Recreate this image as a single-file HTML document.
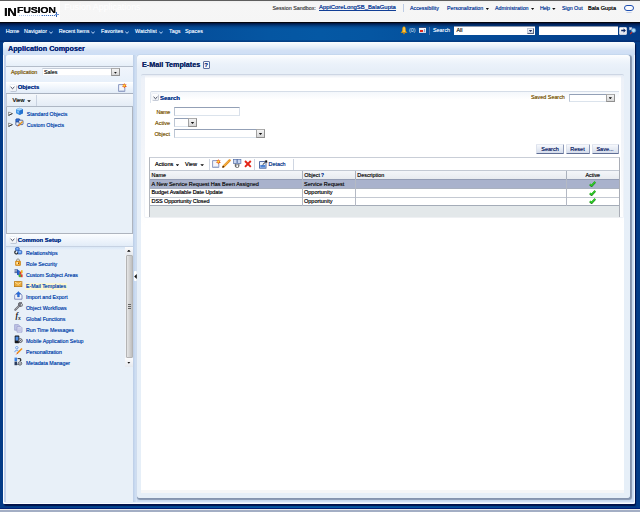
<!DOCTYPE html>
<html>
<head>
<meta charset="utf-8">
<title>Application Composer</title>
<style>
*{box-sizing:border-box;margin:0;padding:0}
html,body{width:640px;height:512px;overflow:hidden}
body{background:linear-gradient(90deg,#033b87 0,#044996 22%,#0556a2 42%,#0558a4 50%,#0556a2 58%,#044996 78%,#033b87 100%);font-family:"Liberation Sans",sans-serif;font-size:5.5px;color:#222;position:relative}
.a{position:absolute}
.t{position:absolute;white-space:nowrap;line-height:1;text-shadow:0 0 .35px currentColor}
/* header */
#hdr{left:0;top:0;width:640px;height:23px;background:linear-gradient(#e9e9e9 0,#f3f3f3 2px,#f6f6f6 4px,#f5f5f5)}
#hdrtop{left:0;top:0;width:640px;height:1px;background:#5e5e5e}
#hdrbot{left:0;top:22.2px;width:640px;height:1.3px;background:#05070f}
#logo{left:0;top:1px;width:60px;height:21px;background:#fff}
#nav{left:0;top:23.4px;width:640px;height:18.6px;background:linear-gradient(rgba(0,12,50,.9),rgba(0,18,64,.5) 2px,rgba(0,20,70,.15) 4px,rgba(0,20,70,0) 6px,rgba(0,20,70,0) 16.6px,rgba(0,20,80,.25) 17.6px,rgba(0,20,80,.4))}
.nv{color:#dfeafa;font-size:5.4px;top:28.6px}
.hl{color:#1a479c;font-size:5.3px;top:5.9px;text-shadow:0 0 .25px currentColor}
/* page panel */
#page{left:3px;top:42px;width:632px;height:461.5px;background:#cfdff4;border-radius:3px 3px 2px 2px;box-shadow:inset 1.3px 0 0 #fafcff,inset -1px 0 0 #f2f6fd,inset 0 -1.5px 0 #fafcff,1px 1.2px 1px #00124a}
#pgl{left:4.2px;top:55px;width:1.8px;height:446.6px;background:#c3d2ec}
#pagehd{left:3px;top:42px;width:632px;height:13px;border-radius:3px 3px 0 0;background:linear-gradient(#fcfdff 0,#f1f6fc 2.5px,#e4edf9 5.5px,#d3e1f5 8.5px,#cddef5 13px)}
#ptitle{left:8px;top:45.2px;font-size:7.2px;font-weight:bold;color:#0a2a78;text-shadow:0 0 .3px #0a2a78}
/* left */
#left{left:6px;top:55px;width:128px;height:446.6px;background:#e8f0f8;border-radius:3px 0 0 0}
#lefttop{left:6px;top:55px;width:128px;height:12px;background:linear-gradient(#fafcff,#e6eff9);border-radius:3px 0 0 0;border-bottom:1px solid #b4bdca}
#approw{left:6px;top:67px;width:128px;height:15px;background:linear-gradient(#f0f5fc,#e8f0fa)}
.lbl{color:#83621a;font-size:5.4px;text-shadow:0 0 .2px currentColor}
.inp{background:#fff;border:1px solid;border-color:#93a0b6 #d9e0ea #dbe3ec #bcc6d4}
.sechd{background:linear-gradient(#fbfdff,#e2ecf8);border-bottom:1px solid #b9c4d2}
.sect{font-weight:bold;font-size:5.9px;color:#10378a}
.lnk{color:#174fae;font-size:5.25px;text-shadow:0 0 .25px currentColor;margin-top:.3px}

/* right */
#right{left:137px;top:55px;width:492.5px;height:443px;background:linear-gradient(#fdfeff 0,#f3f7fc 4px,#ebf2fa 9px,#e7eff8 15px,#e6eff8 100%);border-radius:3px;box-shadow:1px 1px 1px .2px #8494ae}
#rtitle{left:142px;top:61.2px;font-size:7.2px;font-weight:bold;color:#102a66}
#sub{left:141px;top:74px;width:483px;height:418.5px;background:linear-gradient(#e6edf7 0,#edf1f8 4px,#f1f4f9 70px,#fff 150px,#fff 414.5px,#f5f6f7 415px);border-radius:2px 2px 0 0;border-top:1.3px solid #cdd6e4}
#subw{left:144.5px;top:75.3px;width:476px;height:413.7px;background:linear-gradient(#e4e9f1 0,#f4f6fa 1.7px,#fff 3.5px);border-radius:1px 1px 0 0}
.btn{position:absolute;height:10.4px;top:144px;border:1px solid;border-color:#e4e8f1 #8f9bb8 #5f6e95 #dde2ed;background:linear-gradient(#f6f8fc,#e6ebf4 50%,#d5dceb);font-size:5.5px;color:#1a2f6c;text-align:center;line-height:8.6px;border-radius:1px;text-shadow:0 0 .35px currentColor}
.dd{position:absolute;background:linear-gradient(#f4f4f4,#d6d6d6);border:1px solid #909090;border-top-color:#acacac;border-left-color:#a2a2a2}
.dd:after{content:"";position:absolute;left:50%;top:50%;margin:-.5px 0 0 -1.75px;width:3.5px;height:2.1px;background:#111;clip-path:polygon(0 0,100% 0,50% 100%)}
.th{position:absolute;top:170.5px;height:9px;background:linear-gradient(#f4f6f9,#e6e9ee);border-right:1px solid #aab1bd;font-size:5.4px;color:#222;line-height:9.2px;padding-left:2px;text-shadow:0 0 .12px currentColor}
.td{font-size:5.5px;color:#1e1e22;text-shadow:0 0 .12px currentColor}
.car{position:absolute;width:3.7px;height:2.1px;background:#111;clip-path:polygon(0 0,100% 0,50% 100%)}
</style>
</head>
<body>
<!-- HEADER -->
<div class="a" id="hdr"></div>
<div class="a" id="hdrtop"></div>
<div class="a" id="logo"></div>
<div class="a" id="hdrbot"></div>
<div class="t" style="left:3.5px;top:5.6px;font-size:11.6px;font-weight:bold;color:#0c0c0c;letter-spacing:-.3px;transform:scaleX(1.14);transform-origin:0 0;text-shadow:0 0 .4px #000">IN</div>
<div class="t" style="left:17px;top:5.9px;font-size:8.6px;font-weight:bold;color:#0c0c0c;letter-spacing:-.2px;transform:scaleX(1.24);transform-origin:0 0;text-shadow:0 0 .4px #000">FUSION</div>
<div class="a" style="left:19px;top:15px;width:24px;height:1px;background:repeating-linear-gradient(90deg,#a9c3e8 0 1px,#fff 1px 2px)"></div>
<div class="a" style="left:42px;top:14.5px;width:14px;height:1.5px;background:repeating-linear-gradient(90deg,#3d6fc0 0 1px,#dfe9f7 1px 2px)"></div>
<div class="a" style="left:56px;top:11.5px;width:1px;height:5.5px;background:#2b5fb5"></div>
<div class="a" style="left:54.5px;top:14px;width:4px;height:1px;background:#6d96d6"></div>
<div class="t" style="left:64.3px;top:2.9px;font-size:8.85px;color:#fff;text-shadow:none">Fusion Applications</div>

<div class="t" style="left:272.5px;top:5.9px;font-size:5.4px;color:#555;text-shadow:0 0 .15px #555">Session Sandbox:</div>
<div class="t hl" style="left:319px;font-size:5.92px;top:5.4px;text-decoration:underline;color:#123f96">AppiCoreLongSB_BalaGupta</div>
<div class="a" style="left:403px;top:4px;width:1px;height:8px;background:#bccbe4"></div>
<div class="t hl" style="left:410px">Accessibility</div>
<div class="t hl" style="left:447px">Personalization</div>
<div class="t hl" style="left:495px">Administration</div>
<div class="t hl" style="left:540px;letter-spacing:-.3px">Help</div>
<div class="t hl" style="left:562px">Sign Out</div>
<div class="t" style="left:588px;top:5.8px;font-size:5.6px;color:#111;text-shadow:0 0 .15px #111">Bala Gupta</div>

<!-- NAV -->
<div class="a" id="nav"></div>
<div class="t nv" style="left:5.8px;letter-spacing:-.3px">Home</div>
<div class="t nv" style="left:24px">Navigator</div>
<div class="t nv" style="left:58.8px;letter-spacing:-.11px">Recent Items</div>
<div class="t nv" style="left:101px">Favorites</div>
<div class="t nv" style="left:135px">Watchlist</div>
<div class="t nv" style="left:169px">Tags</div>
<div class="t nv" style="left:185px">Spaces</div>
<div class="t nv" style="left:409px;top:27.8px;text-shadow:none">(0)</div>
<div class="t nv" style="left:433px;top:28.2px;text-shadow:0 0 .15px currentColor">Search</div>

<!-- header carets + O -->
<div class="car" style="left:485.5px;top:7.8px"></div>
<div class="car" style="left:530.8px;top:7.8px"></div>
<div class="car" style="left:552px;top:7.8px"></div>
<div class="a" style="left:624px;top:5px;width:10px;height:6.4px;border:1.3px solid #1c4eb0;border-radius:3.2px;background:#fbfbfd"></div>
<div class="a" style="left:626px;top:12.3px;width:6px;height:1.2px;border-radius:50%;background:#c4d2ee"></div>
<!-- nav chevrons -->
<svg class="a" style="left:48.5px;top:30.5px" width="4" height="3" viewBox="0 0 4 3"><path d="M.3.5L2 2.4L3.7.5" stroke="#bcd5f6" stroke-width="1" fill="none"/></svg>
<svg class="a" style="left:90.9px;top:30.5px" width="4" height="3" viewBox="0 0 4 3"><path d="M.3.5L2 2.4L3.7.5" stroke="#bcd5f6" stroke-width="1" fill="none"/></svg>
<svg class="a" style="left:124.6px;top:30.5px" width="4" height="3" viewBox="0 0 4 3"><path d="M.3.5L2 2.4L3.7.5" stroke="#bcd5f6" stroke-width="1" fill="none"/></svg>
<svg class="a" style="left:158.5px;top:30.5px" width="4" height="3" viewBox="0 0 4 3"><path d="M.3.5L2 2.4L3.7.5" stroke="#bcd5f6" stroke-width="1" fill="none"/></svg>
<!-- bell -->
<svg class="a" style="left:399.5px;top:25.5px" width="8" height="9" viewBox="0 0 8 9"><path d="M4 .6C2.6.6 2.3 2 2.3 3.4C2.3 5.2 1.6 5.9.5 6.8H7.5C6.4 5.9 5.7 5.2 5.7 3.4C5.7 2 5.4.6 4 .6z" fill="#f6a700"/><path d="M3.6 1.5h.9v4.6h-.9z" fill="#fde3a6"/><circle cx="4" cy="7.6" r=".8" fill="#d98200"/></svg>
<!-- flag/card icon -->
<div class="a" style="left:419px;top:27.3px;width:7px;height:6px;background:linear-gradient(#fdfdff,#c9d2e4);border-top:1px solid #3a4a78"></div>
<div class="a" style="left:420.4px;top:30px;width:2.6px;height:1.6px;background:#e0251b"></div>
<div class="a" style="left:423.6px;top:28.8px;width:1.6px;height:3.6px;background:#8d99bd"></div>
<div class="a" style="left:429px;top:27px;width:1px;height:8px;background:#4f70aa"></div>
<!-- search widgets -->
<div class="a" style="left:453.6px;top:26px;width:81px;height:9px;background:#fff;border-top:1px solid #8b97ad"></div>
<div class="t" style="left:456.5px;top:28.3px;font-size:5.4px;color:#333">All</div>
<div class="a" style="left:527px;top:27.6px;width:7px;height:6.4px;background:linear-gradient(#f4f6fa,#cdd5e3);border:1px solid;border-color:#c3cbdb #56627f #56627f #c3cbdb"></div>
<div class="car" style="left:528.7px;top:29.9px;background:#1c2d63"></div>
<div class="a" style="left:538.5px;top:26px;width:79px;height:9px;background:#fff;border-top:1px solid #8b97ad"></div>
<div class="a" style="left:619px;top:26.5px;width:8px;height:8px;background:linear-gradient(#fff,#dfe5f0);border:1px solid #c9d1e0;border-radius:1px"></div>
<svg class="a" style="left:620.5px;top:28px" width="5" height="5" viewBox="0 0 5 5"><path d="M.2 1.8H2.6V.3L4.9 2.5L2.6 4.7V3.2H.2z" fill="#0e2a66"/></svg>
<svg class="a" style="left:629px;top:27px" width="8" height="8" viewBox="0 0 8 8"><rect x=".3" y=".3" width="2.6" height="2.6" fill="#dfe6f4" stroke="#8fa0c6" stroke-width=".5"/><circle cx="4.6" cy="3.4" r="2.1" fill="#a9ddf7" stroke="#5b86c2" stroke-width=".8"/><path d="M3 5.2L1.2 7.2" stroke="#d32418" stroke-width="1.1"/></svg>

<!-- PAGE -->
<div class="a" id="page"></div>
<div class="a" id="pagehd"></div>
<div class="a" id="pgl"></div>
<div class="t" id="ptitle">Application Composer</div>

<!-- LEFT -->
<div class="a" id="left"></div>
<div class="a" id="lefttop"></div>
<div class="a" id="approw"></div>
<div class="t lbl" style="left:11px;top:69.5px">Application</div>
<div class="a inp" style="left:42px;top:67.6px;width:70px;height:8.8px;border-color:#c3cbd7 #eef2f8 #eef2f8 #e6ebf3"></div>
<div class="t" style="left:44px;top:70px;font-size:5.4px;color:#333">Sales</div>
<div class="dd" style="left:111px;top:67.8px;width:8.9px;height:8.6px"></div>
<!-- Objects header -->
<div class="a sechd" style="left:6px;top:82px;width:128px;height:12.2px;border-top:1px solid #fff;border-bottom-color:#a9b2c0"></div>
<div class="a" style="left:9.6px;top:84.6px;width:6px;height:6px;background:linear-gradient(#fff,#edf1f7);box-shadow:.5px .5px 0 .3px #b4bccb,-.3px -.3px 0 .2px #e4e9f1;border-radius:1px"></div>
<svg class="a" style="left:10.1px;top:85.9px" width="5" height="4" viewBox="0 0 5 4"><path d="M.6.9L2.5 2.7L4.4.9" stroke="#2e3346" stroke-width=".9" fill="none"/></svg>
<div class="t sect" style="left:17.7px;top:84.8px">Objects</div>
<!-- new icon -->
<svg class="a" style="left:118px;top:83.2px" width="9" height="10" viewBox="0 0 9 10"><path d="M.6 1.6h6.2v6.8h-6.2z" fill="#f4f6fb" stroke="#6f80b2" stroke-width=".8"/><path d="M1.4 7.6h4.6" stroke="#b9c4de" stroke-width=".7"/><path d="M6.2 0L7 1.5L8.6 1.2L7.8 2.6L8.8 3.9L7.1 3.9L6.2 5.3L5.5 3.8L3.9 3.6L5.1 2.5L4.4 1L5.7 1.5z" fill="#e8501a"/><circle cx="6.3" cy="2.6" r="1.15" fill="#fde23a"/></svg>
<!-- View toolbar -->
<div class="a" style="left:6px;top:94.2px;width:128px;height:12.8px;background:linear-gradient(#f5f8fc,#e4ecf6);border-bottom:1px solid #aeb7c4;border-left:1px solid #c4ccd8"></div>
<div class="a" style="left:36px;top:95px;width:1px;height:11px;background:#c9d2e0"></div>
<div class="t" style="left:12.5px;top:97.8px;font-size:5.6px;color:#1a1a1a">View</div>
<div class="car" style="left:27.2px;top:100.2px"></div>
<!-- tree -->
<div class="a" style="left:6px;top:107px;width:127.4px;height:127px;background:#e8f0f8;border:1.4px solid #aeb4be;border-top:0;border-right-width:1.2px"></div>
<svg class="a" style="left:8px;top:111.3px" width="5" height="5" viewBox="0 0 5 5"><path d="M.6 1L4.4 2.6L.6 4.4z" fill="#fff" stroke="#555" stroke-width=".6"/><path d="M.6 4.4L4.4 2.6" stroke="#222" stroke-width=".8"/></svg>
<svg class="a" style="left:8px;top:122.3px" width="5" height="5" viewBox="0 0 5 5"><path d="M.6 1L4.4 2.6L.6 4.4z" fill="#fff" stroke="#555" stroke-width=".6"/><path d="M.6 4.4L4.4 2.6" stroke="#222" stroke-width=".8"/></svg>
<!-- cube icon -->
<svg class="a" style="left:14.6px;top:106.9px" width="9" height="9" viewBox="0 0 9 9"><path d="M1 2.3L4.6.8L8 2.3V6.3L4.5 8L1 6.3z" fill="#3d93e6"/><path d="M1 2.3L4.6.8L8 2.3L4.5 3.8z" fill="#a9d6fb"/><path d="M4.5 3.8V8L8 6.3V2.3z" fill="#2673cf"/><path d="M2.2 3.6L4 4.4V6L2.2 5.2z" fill="#9fd0fb" opacity=".8"/></svg>
<svg class="a" style="left:14.6px;top:117.8px" width="9" height="9" viewBox="0 0 9 9"><rect x=".8" y=".8" width="4" height="4" rx=".8" fill="#2f6fd6" stroke="#123a8c" stroke-width=".6"/><rect x="3.6" y="2.2" width="4.4" height="4.4" rx=".8" fill="#e9eef8" stroke="#223a78" stroke-width=".7"/><rect x=".8" y="4" width="3.4" height="3.4" rx=".8" fill="#e9eef8" stroke="#223a78" stroke-width=".7"/><path d="M3.3 7.8L7.6 3.6" stroke="#e8961c" stroke-width="1.4"/><path d="M2.8 8.3L3.6 7.5" stroke="#b3261a" stroke-width="1"/></svg>
<div class="t lnk" style="left:26.8px;top:111.8px">Standard Objects</div>
<div class="t lnk" style="left:26.8px;top:122.8px">Custom Objects</div>
<!-- Common Setup header -->
<div class="a sechd" style="left:6px;top:234px;width:128px;height:13px;border-bottom-color:#c6d2e3"></div>
<div class="a" style="left:9.5px;top:237px;width:6px;height:6px;background:linear-gradient(#fff,#edf1f7);box-shadow:.5px .5px 0 .3px #b4bccb,-.3px -.3px 0 .2px #e4e9f1;border-radius:1px"></div>
<svg class="a" style="left:10.1px;top:238.1px" width="5" height="4" viewBox="0 0 5 4"><path d="M.6.9L2.5 2.7L4.4.9" stroke="#2e3346" stroke-width=".9" fill="none"/></svg>
<div class="t sect" style="left:17.7px;top:237.6px">Common Setup</div>
<div class="a" style="left:6px;top:247px;width:119px;height:3px;background:linear-gradient(#d9e7f7,#e8f0f9)"></div>
<!-- list -->
<div class="a" style="left:25px;top:283px;width:42px;height:7px;background:#fbf6d2"></div>
<div class="t lnk" style="left:26px;top:250.8px">Relationships</div>
<div class="t lnk" style="left:26px;top:261.8px">Role Security</div>
<div class="t lnk" style="left:26px;top:272.8px">Custom Subject Areas</div>
<div class="t lnk" style="left:26px;top:283.8px">E-Mail Templates</div>
<div class="t lnk" style="left:26px;top:294.8px">Import and Export</div>
<div class="t lnk" style="left:26px;top:305.8px">Object Workflows</div>
<div class="t lnk" style="left:26px;top:316.8px">Global Functions</div>
<div class="t lnk" style="left:26px;top:327.8px">Run Time Messages</div>
<div class="t lnk" style="left:26px;top:338.8px">Mobile Application Setup</div>
<div class="t lnk" style="left:26px;top:349.8px">Personalization</div>
<div class="t lnk" style="left:26px;top:360.8px">Metadata Manager</div>
<!-- list icons -->
<svg class="a" style="left:14px;top:247px" width="9" height="9" viewBox="0 0 9 9"><rect x="1.6" y=".6" width="3.6" height="3" rx=".7" fill="#3a7ee0" stroke="#1748a8" stroke-width=".6"/><rect x="3.8" y="3.6" width="4" height="3.4" rx=".7" fill="#5b9bf0" stroke="#1748a8" stroke-width=".6"/><path d="M1.8 3.8C.4 4.4.4 6.6 2 7C3.2 7.3 3.6 6.4 3.6 5.6" fill="none" stroke="#16181c" stroke-width="1.1"/><rect x="2.4" y="1.4" width="2" height=".9" fill="#cfe2fb"/><rect x="4.8" y="4.5" width="2" height=".9" fill="#d9e9fd"/></svg>
<svg class="a" style="left:15.2px;top:257.8px" width="6" height="8" viewBox="0 0 6 8"><path d="M1.5 3.4V2.2C1.5.5 4.5.5 4.5 2.2V3.4" fill="none" stroke="#8f8a7e" stroke-width=".9"/><rect x=".5" y="3.1" width="5" height="4.4" rx=".5" fill="#f0a01e" stroke="#c27a0c" stroke-width=".6"/><rect x="1.4" y="4" width="2.2" height="2.4" fill="#fdeab4"/><rect x="3.1" y="4.5" width=".9" height="1.5" fill="#7a4206"/></svg>
<svg class="a" style="left:14px;top:269px" width="9" height="9" viewBox="0 0 9 9"><path d="M.5.8h3.2M.5 2.2h3.2M.5 3.6h3.2" stroke="#2a3f7c" stroke-width=".8"/><path d="M3 0.6L6 2V7L3 5.6z" fill="#2f7be0"/><path d="M3 .6L4.4 1.3V6.3L3 5.6z" fill="#1b55b8"/><rect x="5.6" y="2.6" width="1.8" height="3.2" fill="#e23a2a"/><rect x="7" y="1.2" width="1.6" height="3" fill="#f1b31d"/><circle cx="6" cy="6.8" r="1.5" fill="#44b43a"/><rect x="6.8" y="5.4" width="1.8" height="2.8" fill="#e23a2a"/></svg>
<svg class="a" style="left:14px;top:280.8px" width="9" height="7" viewBox="0 0 9 7"><rect x=".5" y=".6" width="7.4" height="5" fill="#efb040" stroke="#b87a14" stroke-width=".8"/><path d="M.9 1L4.2 3.4L7.5 1" fill="none" stroke="#fbe6b0" stroke-width=".8"/><path d="M1.2 5L3 3.2M7.2 5L5.4 3.2" stroke="#d69630" stroke-width=".5"/></svg>
<svg class="a" style="left:14px;top:290.5px" width="9" height="9" viewBox="0 0 9 9"><path d="M.7 4.2L1.8 3h5L8 4.2V8.2H.7z" fill="#f4f6fb" stroke="#5563a8" stroke-width=".7"/><path d="M4.4.4L6.8 3H5.4V6H3.4V3H2z" fill="#2a6fe0" stroke="#154aa8" stroke-width=".3"/></svg>
<svg class="a" style="left:14px;top:301.5px" width="9" height="9" viewBox="0 0 9 9"><path d="M1.3 7.7L5.2 3.8" stroke="#66676f" stroke-width="2" stroke-linecap="round"/><path d="M1.4 7.5L5 3.9" stroke="#c9cad0" stroke-width=".7"/><path d="M7.9 1.2L6.5 2.6L6.9 3.6L5.9 3.2L5.4 3.7C4.6 3 4.4 1.8 5.1 1C5.8.2 7 .1 7.9.6L6.6 1.5z" fill="#85868e" stroke="#4f5058" stroke-width=".5"/><circle cx="6.4" cy="2.6" r="1.9" fill="none" stroke="#6f7078" stroke-width="1" stroke-dasharray="8.5 3.4" transform="rotate(-20 6.4 2.6)"/></svg>
<div class="t" style="left:15.4px;top:312.4px;font-size:7.8px;font-family:'Liberation Serif',serif;font-style:italic;font-weight:bold;color:#16181c;text-shadow:none">f</div>
<div class="t" style="left:18.1px;top:315.6px;font-size:5.6px;font-family:'Liberation Serif',serif;font-style:italic;font-weight:bold;color:#16181c;text-shadow:none">x</div>
<svg class="a" style="left:14px;top:323.5px" width="9" height="9" viewBox="0 0 9 9"><path d="M.6.6H4.4L5.6 1.8V6.2H.6z" fill="#bfc3e6" stroke="#8e93c4" stroke-width=".6"/><path d="M3 2.6H6.8L8 3.8V8.2H3z" fill="#d7daf1" stroke="#8e93c4" stroke-width=".6"/><path d="M3.8 5H7M3.8 6.4H7" stroke="#a7abd6" stroke-width=".5"/></svg>
<svg class="a" style="left:14px;top:334.5px" width="9" height="9" viewBox="0 0 9 9"><rect x=".7" y=".6" width="4.6" height="7.6" rx=".8" fill="#16181c"/><rect x="1.5" y="1.6" width="3" height="4" fill="#4f8fe6"/><circle cx="6.3" cy="5.6" r="1.9" fill="#e8eaf0" stroke="#30323a" stroke-width=".8"/><circle cx="6.3" cy="5.6" r=".6" fill="#30323a"/><path d="M4.2 7.6L6 5.8" stroke="#30323a" stroke-width=".8"/></svg>
<svg class="a" style="left:14px;top:346px" width="9" height="9" viewBox="0 0 9 9"><circle cx="2.8" cy="1.7" r="1.2" fill="#fff" stroke="#3f7fe0" stroke-width=".7"/><path d="M.8 6.2C.8 3.6 4.8 3.6 4.8 6.2" fill="#dbe8fb" stroke="#3f7fe0" stroke-width=".7"/><path d="M3 7.6L8 2.4" stroke="#f0901a" stroke-width="1.5"/><path d="M2.4 8.3L3.3 7.4" stroke="#c42a1a" stroke-width="1"/></svg>
<svg class="a" style="left:14px;top:357px" width="9" height="9" viewBox="0 0 9 9"><rect x=".5" y=".6" width="2.6" height="3.6" fill="#3a80e2"/><rect x=".5" y="4.6" width="2.6" height="3.6" fill="#2a3a5c"/><path d="M3.6 1.6H6.6V3.4" fill="none" stroke="#16181c" stroke-width=".9"/><path d="M5.4 2.8L6.6 4.2L7.8 2.8z" fill="#16181c"/><circle cx="6" cy="6.4" r="1.7" fill="#eef0f4" stroke="#3a3c44" stroke-width=".8"/><circle cx="6" cy="6.4" r=".5" fill="#3a3c44"/><path d="M3.4 7.4H4.4" stroke="#16181c" stroke-width=".8"/></svg>
<!-- scrollbar -->
<div class="a" style="left:125px;top:247px;width:8px;height:120px;background:#f0f3f7"></div>
<div class="a" style="left:125px;top:247px;width:8px;height:8px;background:linear-gradient(#fcfcfd,#e6e9ee)"></div>
<div class="a" style="left:125px;top:358px;width:8px;height:9px;background:linear-gradient(#fcfcfd,#e6e9ee)"></div>
<div class="a" style="left:125.5px;top:255px;width:7px;height:103px;background:linear-gradient(90deg,#e6e6e6,#d2d2d2 50%,#bfbfbf);border:1px solid #b4b4b4;border-radius:1px"></div>
<div class="a" style="left:127.5px;top:304px;width:3px;height:1px;background:#666"></div>
<div class="a" style="left:127.5px;top:306px;width:3px;height:1px;background:#666"></div>
<div class="a" style="left:127.5px;top:308px;width:3px;height:1px;background:#666"></div>
<div class="car" style="left:127px;top:249.6px;clip-path:polygon(0 100%,100% 100%,50% 0)"></div>
<div class="car" style="left:127px;top:361.6px"></div>
<!-- splitter -->
<div class="a" style="left:133px;top:55px;width:4px;height:446.6px;background:linear-gradient(90deg,#bccde6 0,#c6d8ef 1.5px,#d0dff3 3px,#dde9f7 4px)"></div>
<div class="a" style="left:134px;top:271px;width:3px;height:10px;background:#fff;border-radius:1px"></div>
<svg class="a" style="left:134px;top:273.5px" width="3" height="5" viewBox="0 0 3 5"><path d="M2.8 0V5L.2 2.5z" fill="#111"/></svg>

<!-- RIGHT -->
<div class="a" id="right"></div>
<div class="t" id="rtitle">E-Mail Templates</div>
<div class="a" style="left:202.5px;top:61px;width:7px;height:8px;border:1px solid #5b6f9f;background:#f4f7fc;border-radius:1px"></div>
<div class="t" style="left:204.2px;top:62.3px;font-size:6px;font-weight:bold;color:#1b3a86">?</div>
<div class="a" id="sub"></div>
<div class="a" id="subw"></div>
<!-- search header -->
<div class="a" style="left:150px;top:91px;width:469px;height:12px;border-top:1px solid #d5dde8;border-left:1px solid #dde4ee;border-radius:2px 0 0 0;background:linear-gradient(#f4f7fb,#fff 70%)"></div>
<div class="a" style="left:152.2px;top:94.4px;width:6px;height:6px;background:linear-gradient(#fff,#edf1f7);box-shadow:.5px .5px 0 .3px #b4bccb,-.3px -.3px 0 .2px #e4e9f1;border-radius:1px"></div>
<svg class="a" style="left:152.7px;top:95.6px" width="5" height="4" viewBox="0 0 5 4"><path d="M.6.9L2.5 2.7L4.4.9" stroke="#2e3346" stroke-width=".9" fill="none"/></svg>
<div class="t" style="left:160px;top:94.6px;font-size:6px;font-weight:bold;color:#17438f">Search</div>
<div class="t lbl" style="left:531px;top:95px">Saved Search</div>
<div class="a inp" style="left:569px;top:93.5px;width:38px;height:8.5px"></div>
<div class="dd" style="left:606px;top:93.5px;width:8.5px;height:8.5px"></div>
<!-- fields -->
<div class="t lbl" style="right:470px;top:109.6px;letter-spacing:-.25px">Name</div>
<div class="a inp" style="left:174px;top:107px;width:66px;height:9px"></div>
<div class="t lbl" style="right:470px;top:120.5px;font-size:5.5px">Active</div>
<div class="a inp" style="left:174px;top:118px;width:15px;height:9px"></div>
<div class="dd" style="left:188px;top:118px;width:9px;height:9px"></div>
<div class="t lbl" style="right:470px;top:131.5px">Object</div>
<div class="a inp" style="left:174px;top:129px;width:83px;height:9px"></div>
<div class="dd" style="left:256px;top:129px;width:9px;height:9px"></div>
<!-- buttons -->
<div class="btn" style="left:536px;width:28px">Search</div>
<div class="btn" style="left:565.5px;width:24px">Reset</div>
<div class="btn" style="left:591.5px;width:27px">Save...</div>
<!-- table panel -->
<div class="a" style="left:144.3px;top:153px;width:480px;height:65px;border:1px solid #f0f3f8;border-top:0;border-radius:0 0 2px 2px"></div>
<div class="a" style="left:149.3px;top:157.3px;width:470.9px;height:59.8px;border:1.2px solid #a9adb6;border-top:1px solid #c9ced7;border-bottom:0;border-left-color:#b3b7be;background:#e3e8ea"></div>
<div class="a" style="left:150px;top:217px;width:470px;height:.8px;background:#eef0f3"></div>
<div class="a" style="left:150px;top:158px;width:469px;height:12.5px;background:#fff;border-bottom:1px solid #c3c9d3"></div>
<div class="t" style="left:155px;top:161.8px;font-size:5.6px;color:#1a1a1a">Actions</div>
<div class="car" style="left:175.6px;top:164.2px"></div>
<div class="t" style="left:185px;top:161.8px;font-size:5.6px;color:#1a1a1a">View</div>
<div class="car" style="left:200.3px;top:164.2px"></div>
<div class="a" style="left:209px;top:159px;width:1px;height:11px;background:#cfd6e2"></div>
<div class="a" style="left:254px;top:159px;width:1px;height:11px;background:#cfd6e2"></div>
<div class="a" style="left:293px;top:159px;width:1px;height:11px;background:#cfd6e2"></div>
<!-- toolbar icons -->
<svg class="a" style="left:212px;top:158.5px" width="9" height="10" viewBox="0 0 9 10"><path d="M.6 1.6h6.2v6.8h-6.2z" fill="#f4f6fb" stroke="#6f80b2" stroke-width=".8"/><path d="M1.4 7.6h4.6" stroke="#b9c4de" stroke-width=".7"/><path d="M6.2 0L7 1.5L8.6 1.2L7.8 2.6L8.8 3.9L7.1 3.9L6.2 5.3L5.5 3.8L3.9 3.6L5.1 2.5L4.4 1L5.7 1.5z" fill="#e8501a"/><circle cx="6.3" cy="2.6" r="1.15" fill="#fde23a"/></svg>
<svg class="a" style="left:222px;top:159px" width="9" height="9" viewBox="0 0 9 9"><path d="M1.4 7.6L7.6 1.4" stroke="#e58a12" stroke-width="2.3" stroke-linecap="round"/><path d="M1.6 7.0L7.0 1.6" stroke="#fbd47c" stroke-width=".8"/><path d="M.5 8.5L1.9 7.1" stroke="#4a2a12" stroke-width="1.2"/></svg>
<svg class="a" style="left:233px;top:159px" width="9" height="9" viewBox="0 0 9 9"><rect x=".6" y=".6" width="3.3" height="4" fill="#c9d6ef" stroke="#5470a8" stroke-width=".7"/><rect x="4.6" y=".6" width="3.3" height="4" fill="#c9d6ef" stroke="#5470a8" stroke-width=".7"/><path d="M2.3 4.8v2.6h3.6V4.8" fill="none" stroke="#333" stroke-width=".8"/><rect x="3" y="5.8" width="2.6" height="2.6" fill="#fff" stroke="#444" stroke-width=".6"/></svg>
<svg class="a" style="left:244px;top:160px" width="8" height="8" viewBox="0 0 8 8"><path d="M1 1L6.8 6.8M6.8 1L1 6.8" stroke="#e32417" stroke-width="1.9"/></svg>
<svg class="a" style="left:259px;top:159.5px" width="9" height="9" viewBox="0 0 9 9"><rect x=".6" y="1.6" width="6.4" height="6.6" fill="#eaf1fb" stroke="#2e4f93" stroke-width=".8"/><rect x="1.3" y="5" width="5" height="2.6" fill="#4f86d8"/><path d="M3.6 4.8L7.8 .8" stroke="#111" stroke-width=".9"/><path d="M5.6.6h2.6v2.6z" fill="#111"/></svg>
<div class="t" style="left:268.5px;top:161.9px;font-size:5.4px;color:#17438f">Detach</div>
<!-- table header -->
<div class="a" style="left:150px;top:170.5px;width:469px;height:9px;background:linear-gradient(#f4f6f9,#e6e9ee)"></div>
<div class="th" style="left:150px;width:153px;padding-left:1.5px">Name</div>
<div class="th" style="left:303px;width:53px;padding-left:1.3px">Object</div>
<div class="th" style="left:356px;width:210.5px;padding-left:1.3px">Description</div>
<div class="th" style="left:566.5px;width:52.5px;padding-left:0;text-align:center;border-right:0">Active</div>
<div class="t" style="left:321px;top:174px;font-size:4.8px;font-weight:bold;color:#1d4494">?</div>
<!-- rows -->
<div class="a" style="left:150px;top:179.4px;width:469px;height:8.8px;background:#a9b2cc;border-top:1px solid #939cb4"></div>
<div class="a" style="left:150px;top:188.1px;width:469px;height:8.8px;background:#fff;border-top:1px solid #aab1bf"></div>
<div class="a" style="left:150px;top:196.9px;width:469px;height:9.2px;background:#fff;border-top:1px solid #c4c9d2;border-bottom:1px solid #a4acb8"></div>
<div class="a" style="left:302px;top:179.4px;width:1px;height:26.6px;background:#b4b9c4"></div>
<div class="a" style="left:355px;top:179.4px;width:1px;height:26.6px;background:#b4b9c4"></div>
<div class="a" style="left:565.5px;top:179.4px;width:1px;height:26.6px;background:#b4b9c4"></div>
<div class="t td" style="left:151.5px;top:181.5px">A New Service Request Has Been Assigned</div>
<div class="t td" style="left:151.5px;top:190.3px;letter-spacing:-.075px">Budget Available Date Update</div>
<div class="t td" style="left:151.5px;top:198.8px;letter-spacing:-.09px">DSS Opportunity Closed</div>
<div class="t td" style="left:304px;top:181.5px">Service Request</div>
<div class="t td" style="left:304px;top:190.3px">Opportunity</div>
<div class="t td" style="left:304px;top:198.8px">Opportunity</div>
<svg class="a" style="left:589px;top:181px" width="7" height="6" viewBox="0 0 7 6"><path d="M.9 3.4L2.6 5L6.2 1" stroke="#1c7a1a" stroke-width="2" fill="none"/><path d="M.9 3.1L2.6 4.6L6.2.8" stroke="#2fd028" stroke-width="1.4" fill="none"/></svg>
<svg class="a" style="left:589px;top:189.7px" width="7" height="6" viewBox="0 0 7 6"><path d="M.9 3.4L2.6 5L6.2 1" stroke="#1c7a1a" stroke-width="2" fill="none"/><path d="M.9 3.1L2.6 4.6L6.2.8" stroke="#2fd028" stroke-width="1.4" fill="none"/></svg>
<svg class="a" style="left:589px;top:198.2px" width="7" height="6" viewBox="0 0 7 6"><path d="M.9 3.4L2.6 5L6.2 1" stroke="#1c7a1a" stroke-width="2" fill="none"/><path d="M.9 3.1L2.6 4.6L6.2.8" stroke="#2fd028" stroke-width="1.4" fill="none"/></svg>

<!-- bottom -->
<div class="a" style="left:0;top:508.4px;width:640px;height:.6px;background:#001f74"></div><div class="a" style="left:0;top:509px;width:640px;height:1px;background:#ecedeb"></div>
<div class="a" style="left:0;top:510px;width:640px;height:2px;background:#a3aec4"></div>
</body>
</html>
